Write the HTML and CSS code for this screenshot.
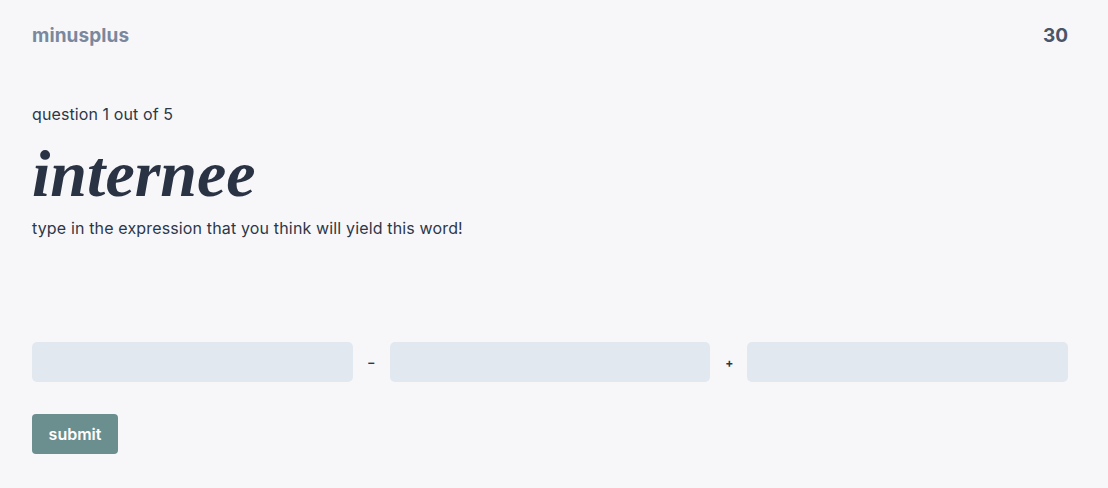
FILE: index.html
```html
<!DOCTYPE html>
<html>
<head>
<meta charset="utf-8">
<link rel="stylesheet" href="styles.css">
</head>
<body>
<div class="page">
  <header class="top">
    <div class="logo">minusplus</div>
    <div class="score">30</div>
  </header>
  <main class="quiz">
    <p class="progress">question 1 out of 5</p>
    <h1 class="word">internee</h1>
    <p class="hint">type in the expression that you think will yield this word!</p>
    <form class="expr">
      <div class="row">
        <input class="field" type="text">
        <span class="op">–</span>
        <input class="field" type="text">
        <span class="op">+</span>
        <input class="field" type="text">
      </div>
      <button class="submit" type="button">submit</button>
    </form>
  </main>
</div>
</body>
</html>
```

FILE: styles.css
```css
* { box-sizing: border-box; }
html, body { margin: 0; padding: 0; }
body {
  background: #f7f7fa;
  font-family: "Inter", "Noto Sans", sans-serif;
  color: #2d3748;
}
.page {
  padding: 22px 40px 0 32px;
}
.top {
  display: flex;
  justify-content: space-between;
  align-items: center;
  height: 26px;
}
.logo {
  font-size: 19px;
  font-weight: 700;
  color: #7a889e;
  letter-spacing: 0.1px;
}
.score {
  font-size: 19px;
  font-weight: 700;
  color: #4a5568;
}
.quiz { padding-top: 56px; }
.progress {
  margin: 0;
  font-size: 16px;
  line-height: 20px;
  letter-spacing: 0.1px;
}
.word {
  margin: 14px 0 0 0;
  font-family: "Liberation Serif", "DejaVu Serif", serif;
  font-style: italic;
  font-weight: 700;
  font-size: 66px;
  line-height: 72px;
  color: #2a3344;
  letter-spacing: 0;
}
.hint {
  margin: 8px 0 0 0;
  font-size: 16px;
  line-height: 20px;
  letter-spacing: 0.15px;
}
.expr { margin-top: 104px; }
.row {
  display: flex;
  align-items: center;
  gap: 15px;
}
.field {
  flex: 1;
  height: 40px;
  border: none;
  border-radius: 5px;
  background: #e2e8f0;
  font-family: inherit;
  font-size: 15px;
  padding: 0 12px;
}
.op {
  width: 7px;
  text-align: center;
  font-size: 12px;
  font-weight: 700;
  color: #2d3748;
}
.submit {
  margin-top: 32px;
  height: 40px;
  width: 86px;
  border: none;
  border-radius: 4px;
  background: #6b8e8f;
  color: #fff;
  font-family: inherit;
  font-weight: 600;
  font-size: 16px;
}
```
